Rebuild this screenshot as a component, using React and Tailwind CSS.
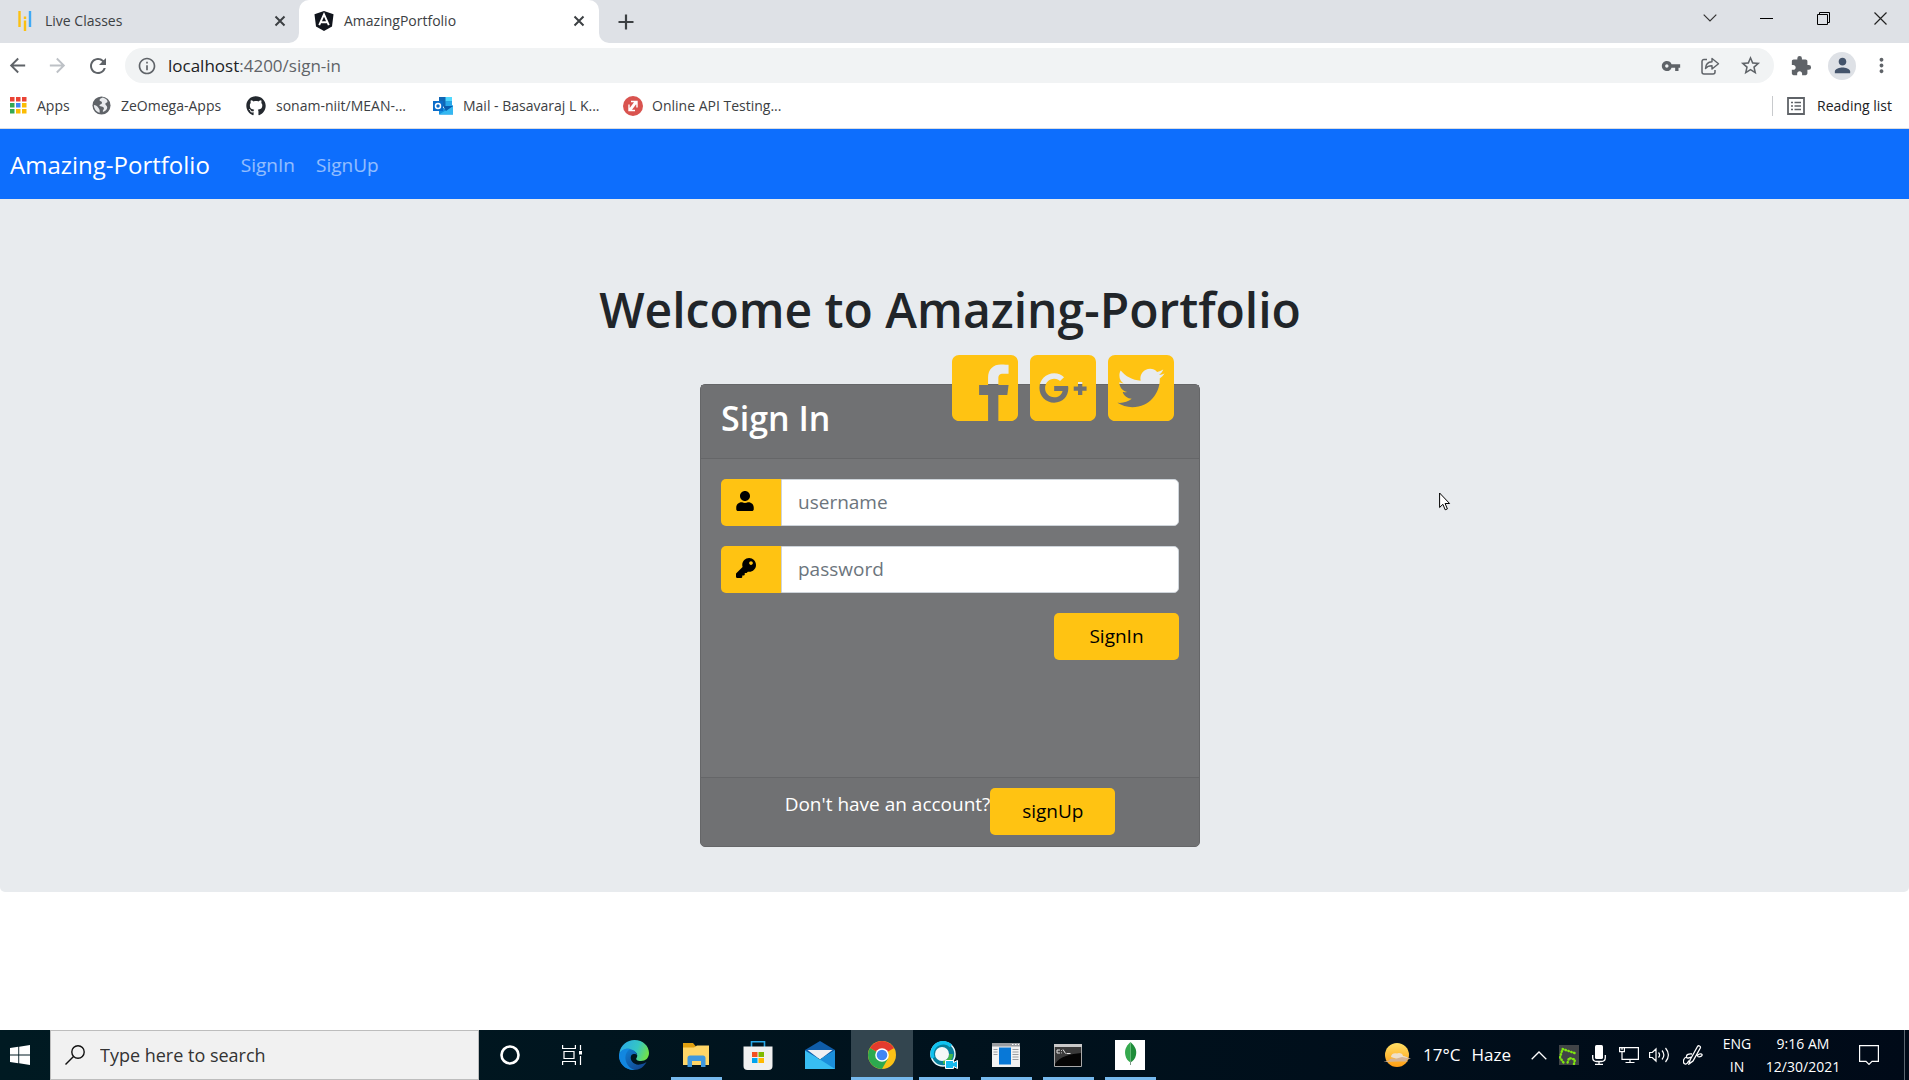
import React from "react";
import { FaUser, FaKey, FaGooglePlusSquare, FaTwitterSquare, FaGithub } from "react-icons/fa";
import {
  MdArrowBack,
  MdArrowForward,
  MdRefresh,
  MdInfoOutline,
  MdVpnKey,
  MdStarBorder,
  MdExtension,
  MdPerson,
  MdMoreVert,
} from "react-icons/md";

function Svg({ box = "0 0 20 20", className, children }) {
  return (
    <svg viewBox={box} className={`shrink-0 ${className}`} fill="none" aria-hidden="true">
      {children}
    </svg>
  );
}

function CloseX({ className }) {
  return (
    <Svg box="0 0 12 12" className={className}>
      <path d="M1.5 1.5l9 9M10.5 1.5l-9 9" stroke="#3c4043" strokeWidth="2" />
    </Svg>
  );
}

function TabStrip() {
  return (
    <div className="flex h-[43px] items-stretch bg-white text-[14px] text-[#3c4043]">
      <div className="flex flex-none bg-[#dee1e6]">
        <div className="flex bg-white">
          <div className="flex w-[299px] items-center rounded-br-[10px] bg-[#dee1e6] pr-[13px] pb-[2px] pl-[17px]">
            <Svg box="0 0 16 20" className="h-5 w-4">
              <path d="M2.5 0v16" stroke="#fbc012" strokeWidth="2.4" />
              <path d="M8 9.500v10.500M8 5.500v2.500" stroke="#fbc012" strokeWidth="2.400" />
              <path d="M13 0v16" stroke="#3fa9f5" strokeWidth="2.400" />
            </Svg>
            <span className="ml-3 flex-1">Live Classes</span>
            <button aria-label="Close Live Classes"><CloseX className="h-3 w-3" /></button>
          </div>
        </div>
        <div className="flex w-[300px] items-center rounded-t-[10px] bg-white pr-[14px] pb-[2px] pl-[15px]">
          <Svg className="h-5 w-5">
            <path d="M10 0l9.500 3.300-1.500 12.200L10 20l-8-4.500L.5 3.300z" fill="#10141c" />
            <path d="M5.200 14.200L10 3.400l4.800 10.800M7.200 11.300h5.600" stroke="#fff" strokeWidth="1.900" />
          </Svg>
          <span className="ml-[10px] flex-1">AmazingPortfolio</span>
          <button aria-label="Close AmazingPortfolio"><CloseX className="h-3 w-3" /></button>
        </div>
      </div>
      <div className="flex flex-1 items-center rounded-bl-[10px] bg-[#dee1e6] pl-[19px]">
        <button aria-label="New tab">
          <Svg box="0 0 16 16" className="h-4 w-4">
            <path d="M8 .5v15M.5 8h15" stroke="#3c4043" strokeWidth="2.200" />
          </Svg>
        </button>
      </div>
      <div className="flex items-center bg-[#dee1e6] pb-[7px] text-black">
        <button aria-label="Search tabs" className="flex w-[57px] justify-center">
          <Svg box="0 0 14 8" className="h-2 w-[14px]"><path d="M.7.7L7 7 13.300.7" stroke="#333" strokeWidth="1.200" /></Svg>
        </button>
        <button aria-label="Minimize" className="flex w-[57px] justify-center">
          <Svg box="0 0 13 1" className="h-px w-[13px]"><path d="M0 .5h13" stroke="#000" /></Svg>
        </button>
        <button aria-label="Restore" className="flex w-[57px] justify-center">
          <Svg box="0 0 13 13" className="h-[13px] w-[13px]">
            <path d="M.5 2.500h10v10h-10zM2.500 2.500v-2h10v10h-2" stroke="#000" />
          </Svg>
        </button>
        <button aria-label="Close window" className="flex w-[57px] justify-center">
          <Svg box="0 0 13 13" className="h-[13px] w-[13px]"><path d="M.5.5l12 12M12.500.5l-12 12" stroke="#222" strokeWidth="1.200" /></Svg>
        </button>
      </div>
    </div>
  );
}

function Toolbar() {
  return (
    <div className="flex h-11 items-center pt-[5px] pb-1 pr-4 pl-[6px] text-[#5f6368]">
      <button aria-label="Back" className="w-10"><MdArrowBack className="size-[23px]" /></button>
      <button aria-label="Forward" className="w-10 text-[#bdc1c6]"><MdArrowForward className="size-[23px]" /></button>
      <button aria-label="Reload" className="w-[39px]"><MdRefresh className="size-6" /></button>
      <div className="flex h-[35px] flex-1 items-center rounded-full bg-[#f1f3f4] pr-3 pl-3">
        <MdInfoOutline className="size-5" />
        <div className="ml-[11px] flex-1 text-[17px]">
          <span className="text-[#202124]">localhost</span>:4200/sign-in
        </div>
        <div className="flex items-center gap-[19px]">
          <button aria-label="Saved passwords"><MdVpnKey className="size-5" /></button>
          <button aria-label="Share">
            <Svg className="size-5">
              <path d="M7 3.500H4A2 2 0 0 0 2 5.500V16a2 2 0 0 0 2 2h9a2 2 0 0 0 2-2v-2" stroke="#5f6368" strokeWidth="1.500" />
              <path d="M5.500 12.500c.2-4 2.500-6.500 6.500-6.700V2.500l6.500 5.300L12 13V9.800c-3 0-5 .7-6.500 2.700z" stroke="#5f6368" strokeWidth="1.400" strokeLinejoin="round" />
            </Svg>
          </button>
          <button aria-label="Bookmark this page"><MdStarBorder className="size-[23px]" /></button>
        </div>
      </div>
      <button aria-label="Extensions" className="ml-4"><MdExtension className="size-[22px]" /></button>
      <button aria-label="Profile" className="ml-4 flex size-7 items-center justify-center rounded-full bg-[#dee1e6] text-[#44546b]">
        <MdPerson className="size-[23px]" />
      </button>
      <button aria-label="Menu" className="ml-[14px]"><MdMoreVert className="size-[23px]" /></button>
    </div>
  );
}

const appDots = ["#ea4335", "#ea4335", "#ea4335", "#34a853", "#4285f4", "#fbbc04", "#34a853", "#fbbc04", "#fbbc04"];

function Bookmark({ icon, children, className }) {
  return (
    <a href="#" className={`flex items-center ${className}`}>
      {icon}
      {children}
    </a>
  );
}

function BookmarksBar() {
  return (
    <div className="flex h-[42px] items-center border-b border-[#dadce0] pr-[17px] pb-1 pl-[10px] text-[14px] text-[#3c4043]">
      <Bookmark
        className="w-[82px] gap-[10px]"
        icon={
          <Svg box="0 0 17 17" className="size-[17px]">
            {appDots.map((c, i) => (
              <rect key={i} x={(i % 3) * 6} y={Math.floor(i / 3) * 6} width="4.500" height="4.500" fill={c} />
            ))}
          </Svg>
        }
      >
        Apps
      </Bookmark>
      <Bookmark
        className="w-[154px] gap-[10px]"
        icon={
          <Svg className="size-[19px]">
            <circle cx="10" cy="10" r="9.500" fill="#5f6368" />
            <path d="M4 4.500c2 0 3 .5 4.500 1.500S12 6 11 8s-3.500 1-4 3 2.500 1.500 3 3.500-1 2-2 3.500C4 17 1.500 13.500 1.500 10S2.500 5.500 4 4.500z" fill="#5f6368" />
            <path d="M11.500 1.700c-1.800.8-3.700 1-3.500 2.800s2.500.5 2.500 2.500-2 1.500-2.500 2.500.5 1.500 2 1.500 3 1 2.500 2.500-1.500 2-1 3c2 0 4.500-2.500 4.500-4.500s-2-2-2-3.500 2.500-1.200 2.300-3-2.500-3-4.800-3.800zM2 9.500c2 0 3.500 1 4.500 2.500s2 2 1.500 5.500C4 16.500 2 13 2 9.500z" fill="#e8eaed" />
          </Svg>
        }
      >
        ZeOmega-Apps
      </Bookmark>
      <Bookmark className="w-[187px] gap-[10px]" icon={<FaGithub className="size-5 shrink-0 text-[#24292f]" />}>
        sonam-niit/MEAN-...
      </Bookmark>
      <Bookmark
        className="w-[190px] gap-[10px]"
        icon={
          <Svg className="size-5">
            <path d="M6 1h13v9H6z" fill="#1066b5" />
            <path d="M12.500 1H19v4.500h-6.500z" fill="#50d9ff" />
            <path d="M12.500 5.500H19V10h-6.500z" fill="#28a8ea" />
            <path d="M6 9l7 4.500L20 9v9.500H6z" fill="#1490df" />
            <path d="M6 18.500L20 10v8.500z" fill="#35b8f1" />
            <path d="M10 10l10 0-7 5z" fill="#0a5cad" />
            <path d="M0 5h10v10H0z" fill="#0a6cc9" />
            <circle cx="5" cy="10" r="2.500" stroke="#fff" strokeWidth="1.500" />
          </Svg>
        }
      >
        Mail - Basavaraj L K...
      </Bookmark>
      <Bookmark
        className="gap-[9px]"
        icon={
          <Svg className="size-5">
            <circle cx="10" cy="10" r="10" fill="#d9534f" />
            <path d="M6.500 13.500l6-8M8 5.500h6v6M13.500 6.500l-6 8M6 8.500v6h6" stroke="#fff" strokeWidth="1.400" />
          </Svg>
        }
      >
        Online API Testing...
      </Bookmark>
      <button className="ml-auto flex items-center gap-3 text-[#202124]">
        <span className="mr-[2px] h-5 w-px bg-[#c8cacd]" />
        <Svg box="0 0 18 18" className="size-[18px]">
          <path d="M1 1h16v16H1z" stroke="#5f6368" strokeWidth="1.800" />
          <path d="M4 5.500h2M7.500 5.500H14M4 9h2M7.500 9H14M4 12.500h2M7.500 12.500H14" stroke="#5f6368" strokeWidth="1.500" />
        </Svg>
        Reading list
      </button>
    </div>
  );
}

function Field({ id, type, icon }) {
  return (
    <div className="flex h-[47px]">
      <label htmlFor={id} aria-label={id} className="flex w-[60px] items-center rounded-l-[5px] bg-[#ffc312] pb-1 pl-[15px] text-black">
        {icon}
      </label>
      <input
        id={id}
        type={type}
        placeholder={id}
        className="min-w-0 flex-1 rounded-r-[5px] border border-[#ced4da] bg-white px-4 text-[19px] placeholder:text-[#6c757d]"
      />
    </div>
  );
}

function SocialIcons() {
  return (
    <div className="absolute -top-[35px] right-[25px] flex gap-3 text-[#ffc312]">
      <a href="#" aria-label="Facebook">
        <svg viewBox="0 0 448 512" fill="currentColor" className="h-[76px] w-[66px]">
          <path d="M448 80v352c0 26.500-21.500 48-48 48h-85.300V302.800h60.600l8.700-67.600h-69.300V192c0-19.600 5.400-32.900 33.500-32.900H384V98.700c-6.200-.8-27.400-2.700-52.200-2.700-51.600 0-87 31.500-87 89.400v49.900H184v67.600h60.900V480H48c-26.500 0-48-21.500-48-48V80c0-26.500 21.500-48 48-48h352c26.500 0 48 21.500 48 48z" />
        </svg>
      </a>
      <a href="#" aria-label="Google Plus"><FaGooglePlusSquare className="h-[76px] w-[66px]" /></a>
      <a href="#" aria-label="Twitter"><FaTwitterSquare className="h-[76px] w-[66px]" /></a>
    </div>
  );
}

function SignInCard() {
  return (
    <form onSubmit={(e) => e.preventDefault()} className="relative mx-auto flex min-h-[463px] w-[500px] flex-col rounded-[5px] border border-[#656668] bg-[#747577]">
      <SocialIcons />
      <div className="h-[74px] border-b border-[#656668] bg-[#707173] px-5 pt-[10px]">
        <h3 className="text-[34px] leading-[46px] font-semibold text-white">Sign In</h3>
      </div>
      <div className="flex flex-1 flex-col gap-5 p-5">
        <Field id="username" type="text" icon={<FaUser className="h-5 w-[18px]" />} />
        <Field id="password" type="password" icon={<FaKey className="size-5" />} />
        <button className="h-[47px] w-[125px] self-end rounded-[5px] bg-[#ffc312] text-[19px] text-black">SignIn</button>
      </div>
      <div className="flex items-start justify-center rounded-b-[4px] border-t border-[#656668] bg-[#707173] px-5 pt-[10px] pb-[11px] text-[19px]">
        <span className="leading-8 text-white">Don't have an account?</span>
        <button type="button" className="h-[47px] w-[125px] rounded-[5px] bg-[#ffc312] text-black">signUp</button>
      </div>
    </form>
  );
}

function Page() {
  return (
    <main className="flex-1 bg-white">
      <nav className="flex h-[70px] items-center bg-[#0d6efd] px-[10px] pt-[2px] text-[19px] text-white/55">
        <a href="#" className="mr-[31px] text-[24px] text-white">Amazing-Portfolio</a>
        <a href="#" className="mr-[21px]">SignIn</a>
        <a href="#">SignUp</a>
      </nav>
      <section className="rounded-b-[5px] bg-[#e8ebee] pt-[81px] pr-[9px] pb-[45px]">
        <h1 className="text-center text-[48px] leading-[60px] font-semibold text-[#212529]">Welcome to Amazing-Portfolio</h1>
        <div className="mt-11"><SignInCard /></div>
      </section>
    </main>
  );
}

function Task({ label, open, active, children }) {
  return (
    <button aria-label={label} className={`relative flex w-[62px] items-center justify-center ${active ? "bg-[#33454f]" : ""}`}>
      {children}
      {open && <span className={`absolute bottom-0 h-[3px] bg-[#76b9ed] ${active ? "w-full" : "w-[51px]"}`} />}
    </button>
  );
}

function Taskbar() {
  return (
    <footer className="flex h-[50px] items-stretch bg-linear-to-r from-[#001a22] via-[#00121d] to-[#000a18] text-white">
      <button aria-label="Start" className="flex w-[50px] items-center justify-center pr-[10px]">
        <Svg className="size-5">
          <path d="M0 3l8.300-1.200v7.700H0zM9.200 1.700L20 0v9.500H9.200zM0 10.500h8.300v7.700L0 17zM9.200 10.500H20V20L9.200 18.300z" fill="#fff" />
        </Svg>
      </button>
      <label className="flex w-[429px] items-center border border-[#bdbdbd] bg-[#f1f1f1] pl-[14px]">
        <Svg className="size-5">
          <circle cx="13" cy="7" r="6.200" stroke="#111" strokeWidth="1.400" />
          <path d="M8.500 11.500L.5 19.500" stroke="#111" strokeWidth="1.400" />
        </Svg>
        <input aria-label="Search" placeholder="Type here to search" className="ml-[15px] min-w-0 flex-1 bg-transparent text-[18px] placeholder:text-[#333]" />
      </label>
      <Task label="Cortana">
        <Svg className="size-5"><circle cx="10" cy="10" r="8.500" stroke="#fff" strokeWidth="2.600" /></Svg>
      </Task>
      <Task label="Task view">
        <Svg className="size-5">
          <path d="M.6 0v3.500h12.800V0M.6 20v-3.500h12.800V20M2 6.500h10v7H2zM18.500 0v5M18.500 11v9" stroke="#fff" strokeWidth="1.200" />
          <path d="M17 6h3v3.500h-3z" fill="#fff" />
        </Svg>
      </Task>
      <Task label="Edge">
        <Svg box="0 0 30 30" className="size-[30px]">
          <defs>
            <linearGradient id="edgeTop" x1="0" x2="1" y1=".2" y2=".5"><stop stopColor="#2aa9e8" /><stop offset=".6" stopColor="#35c6c4" /><stop offset="1" stopColor="#6fe04c" /></linearGradient>
            <linearGradient id="edgeLow" x1="0" x2="1" y1="0" y2="1"><stop stopColor="#0f86dd" /><stop offset="1" stopColor="#123f86" /></linearGradient>
          </defs>
          <path d="M.5 12C2 5 8 0 15.500 0 24 0 30 6 30 13c0 5-3.500 8-8 8-4 0-5.500-1.500-4.500-3 1.500-2 1-6-3.500-7-5-1-10 .5-13.500 5z" fill="url(#edgeTop)" />
          <path d="M0 15.500C1 10.500 6 8 11 9c4 .8 7 3.500 7 6.500-1-2-5-2-6 .5-1.500 4.500 3 9.500 9 8.500 3-.4 5-1.500 6.500-2.500C25 27 20.500 30 15 30 6.500 30 0 23.500 0 15.500z" fill="url(#edgeLow)" />
          <path d="M0 15.500C1 10.500 6 8 11 9c-3.500 2.500-5 6-4.500 10 .5 5 4 9.500 9 11C6.500 30.500 0 23.500 0 15.500z" fill="#1287e0" />
        </Svg>
      </Task>
      <Task label="File Explorer" open>
        <Svg box="0 0 28 24" className="h-6 w-7">
          <path d="M1 0h10l3 3.500V8H1z" fill="#e0a010" />
          <path d="M1 4.500h11l3-2h12V22H1z" fill="#ffd667" />
          <path d="M5.500 24V15c0-1.500 1-2.500 2.500-2.500h13c1.500 0 2.500 1 2.500 2.500v9H19v-6h-9v6z" fill="#3f98de" />
        </Svg>
      </Task>
      <Task label="Microsoft Store">
        <Svg box="0 0 30 30" className="size-[30px]">
          <path d="M8.500 8V1.700h13V8" stroke="#27a8e8" strokeWidth="1.600" />
          <path d="M.5 6.500h29V26a4 4 0 0 1-4 4h-21a4 4 0 0 1-4-4z" fill="#f0f0f0" />
          <path d="M9 12h5.500v5H9z" fill="#f25022" /><path d="M15.500 12H21v5h-5.500z" fill="#7fba00" />
          <path d="M9 18h5.500v5H9z" fill="#00a4ef" /><path d="M15.500 18H21v5h-5.500z" fill="#ffb900" />
        </Svg>
      </Task>
      <Task label="Mail">
        <Svg box="0 0 30 28" className="h-7 w-[30px]">
          <path d="M0 9L15 0l15 9v8H0z" fill="#0f5ca8" />
          <path d="M2.500 9h25L15 18.500z" fill="#efeff2" />
          <path d="M0 9.500l15 9 15-9V28H0z" fill="#38bdf2" />
          <path d="M15 18.500L30 28V9.500z" fill="#1b8fdb" />
        </Svg>
      </Task>
      <Task label="Chrome" open active>
        <Svg box="0 0 28 28" className="size-7">
          <circle cx="14" cy="14" r="14" fill="#fbc116" />
          <path d="M14 14L1.900 7A14 14 0 0 1 26.100 7z" fill="#e33b2e" />
          <path d="M1.900 7A14 14 0 0 0 14 28l6-10.500-6-3.500z" fill="#2da94f" />
          <circle cx="14" cy="14" r="6.800" fill="#fff" />
          <circle cx="14" cy="14" r="5.300" fill="#4285f4" />
        </Svg>
      </Task>
      <Task label="Webex" open>
        <Svg box="0 0 28 28" className="size-7">
          <circle cx="13" cy="13" r="12" fill="#087f9c" stroke="#e8f8fc" strokeWidth="1.500" />
          <path d="M3 17A11 11 0 0 1 21 5" stroke="#10c2f0" strokeWidth="3.500" />
          <path d="M13 21c5 0 8-3.500 8-8" stroke="#45b648" strokeWidth="4" />
          <circle cx="12" cy="13" r="7" fill="#f5f8f8" />
          <path d="M15.500 19.500h8v2l4-2v8l-4-2v2h-8z" fill="#16b9ef" stroke="#fff" strokeWidth="1" />
        </Svg>
      </Task>
      <Task label="Window application" open>
        <Svg box="0 0 28 24" className="h-6 w-7">
          <path d="M0 0h28v24H0z" fill="#f2f2f2" /><path d="M0 0h28v3.500H0z" fill="#9a9da1" />
          <path d="M7 4.500h12v17H7z" fill="#0878d7" />
          <path d="M1.500 6.500h4M1.500 9h4M1.500 11.500h4M20.500 6.500h6M20.500 9h6M20.500 11.500h6M20.500 14h6M20.500 16.500h6" stroke="#9a9da1" />
          <path d="M20 1.500h1.500M23 1.500h1.500M26 1.500h1" stroke="#fff" />
        </Svg>
      </Task>
      <Task label="Command Prompt" open>
        <Svg box="0 0 28 23" className="h-[23px] w-7">
          <path d="M.5.5h27v22H.5z" fill="#050505" stroke="#a9a9a9" /><path d="M0 0h28v3H0z" fill="#c9c9c9" />
          <path d="M1 3h26v6C17 10 6 12 1 20z" fill="#3a3a3a" />
          <path d="M3 6h3M3 6v3h3M7.500 6v.8M7.500 8.500v.8M9 5.500l2.500 4M12.500 9.500h4" stroke="#e5e5e5" />
        </Svg>
      </Task>
      <Task label="MongoDB Compass" open>
        <Svg box="0 0 30 30" className="size-[30px]">
          <path d="M0 0h30v30H0z" fill="#fff" />
          <path d="M15.500 2c5 4.500 6.500 8.500 5.500 13-.8 4-3 6-5.500 7.500z" fill="#1f8d3a" />
          <path d="M15.500 2c-5 4.500-6 8.500-5.200 13 .8 4 2.700 6 5.200 7.500z" fill="#35a94e" />
          <path d="M15.500 21v4" stroke="#7c9885" />
        </Svg>
      </Task>

      <div className="ml-auto flex items-center">
        <button className="flex items-center text-[17px]">
          <Svg box="0 0 28 24" className="h-6 w-7">
            <defs><linearGradient id="sun" x1="0" x2="0" y1="0" y2="1"><stop stopColor="#ffdf65" /><stop offset="1" stopColor="#ff9d13" /></linearGradient></defs>
            <circle cx="14" cy="12" r="12" fill="url(#sun)" />
            <path d="M8 14c0-3 3-4.500 6-3.500 2-1.500 6 0 6 2.500 2 0 4 1 5 2l-11 1z" fill="#eee0cc" />
            <path d="M0 19l6-1.500c1-2 4-2.500 6-1.500l7-2 9 1.500-5 1.500 2 1.500H16z" fill="#d4b394" />
          </Svg>
          <span className="mr-[11px] ml-3">17°C</span>
          <span>Haze</span>
        </button>
        <button aria-label="Show hidden icons" className="ml-5">
          <Svg box="0 0 16 9" className="h-[9px] w-4"><path d="M.7 8.300L8 1l7.300 7.300" stroke="#fff" strokeWidth="1.300" /></Svg>
        </button>
        <Svg className="ml-3 size-5">
          <path d="M0 0h20v20H0z" fill="#414447" />
          <path d="M15.500 8L3.500 4 1 12.500l4.500 6.500M15 19l1-4.500-6-1.500-1.500 5" stroke="#7fe60f" strokeWidth="2.400" strokeLinecap="round" strokeDasharray="0.500 2.500" />
        </Svg>
        <Svg box="0 0 14 20" className="ml-[13px] h-5 w-[14px]">
          <rect x="3" y="0" width="8" height="14" rx="1.500" fill="#fff" />
          <path d="M.7 10v2.500c0 2.500 1.500 4 4 4h4.600c2.500 0 4-1.500 4-4V10M7 16.500v3M3 19.400h8" stroke="#fff" strokeWidth="1.300" />
        </Svg>
        <Svg className="ml-[13px] size-5">
          <path d="M6 2.600h13.400v11.800H3V9M11 14.500v3M6.500 17.500h9M.6 2.600h4.800v4H.6zM3 6.600V9M2 4h2" stroke="#fff" strokeWidth="1.200" />
        </Svg>
        <Svg className="ml-[10px] size-5">
          <path d="M.6 7.500h2.700L7 4v12l-3.700-3.500H.6zM9.500 7.500c1.300 1.500 1.300 3.500 0 5M13 5.500c2.500 3 2.500 6 0 9M16.500 3c3.700 4.500 3.700 9.500 0 14" stroke="#fff" strokeWidth="1.200" />
        </Svg>
        <Svg className="ml-[14px] size-5">
          <path d="M7 15L14.500 1.500c1-1.500 3.500-.2 2.800 1.500L10 16l-4 3zM14 11c2-2.500 4.500-2.500 5-1.500.6 1.500-2 3-4.500 2M9 9c-3-.5-6 .5-5.500 3 .4 1.700 3 1 4.500 0M3.500 12C0 13-.5 18 2 19c2 .8 3-1.500 4-3.500" stroke="#fff" strokeWidth="1.300" />
        </Svg>
        <button className="ml-[17px] w-[34px] text-center text-[14px] leading-[23px]">ENG<br />IN</button>
        <button className="ml-[9px] w-[80px] text-center text-[14px] leading-[23px] whitespace-nowrap">9:16 AM<br />12/30/2021</button>
        <button aria-label="Notifications" className="ml-4">
          <Svg className="size-5"><path d="M.6.6h18.800v15.800H13L10 19.400l-3-3H.6z" stroke="#fff" strokeWidth="1.200" /></Svg>
        </button>
        <span className="mr-1 ml-[25px] h-[50px] w-px bg-[#5b6670]" />
      </div>
    </footer>
  );
}

export default function App() {
  return (
    <div className="relative flex min-h-screen flex-col bg-white font-['Open_Sans',sans-serif]">
      <header className="bg-white">
        <TabStrip />
        <Toolbar />
        <BookmarksBar />
      </header>
      <Page />
      <Taskbar />
      <svg viewBox="0 0 12 19" className="absolute top-[492px] left-[1439px] h-[19px] w-3" aria-hidden="true">
        <path d="M.6 1v14.500l3.300-3.200 2.300 5.500 2.200-.9-2.300-5.400h4.500z" fill="#fff" stroke="#000" />
      </svg>
    </div>
  );
}
